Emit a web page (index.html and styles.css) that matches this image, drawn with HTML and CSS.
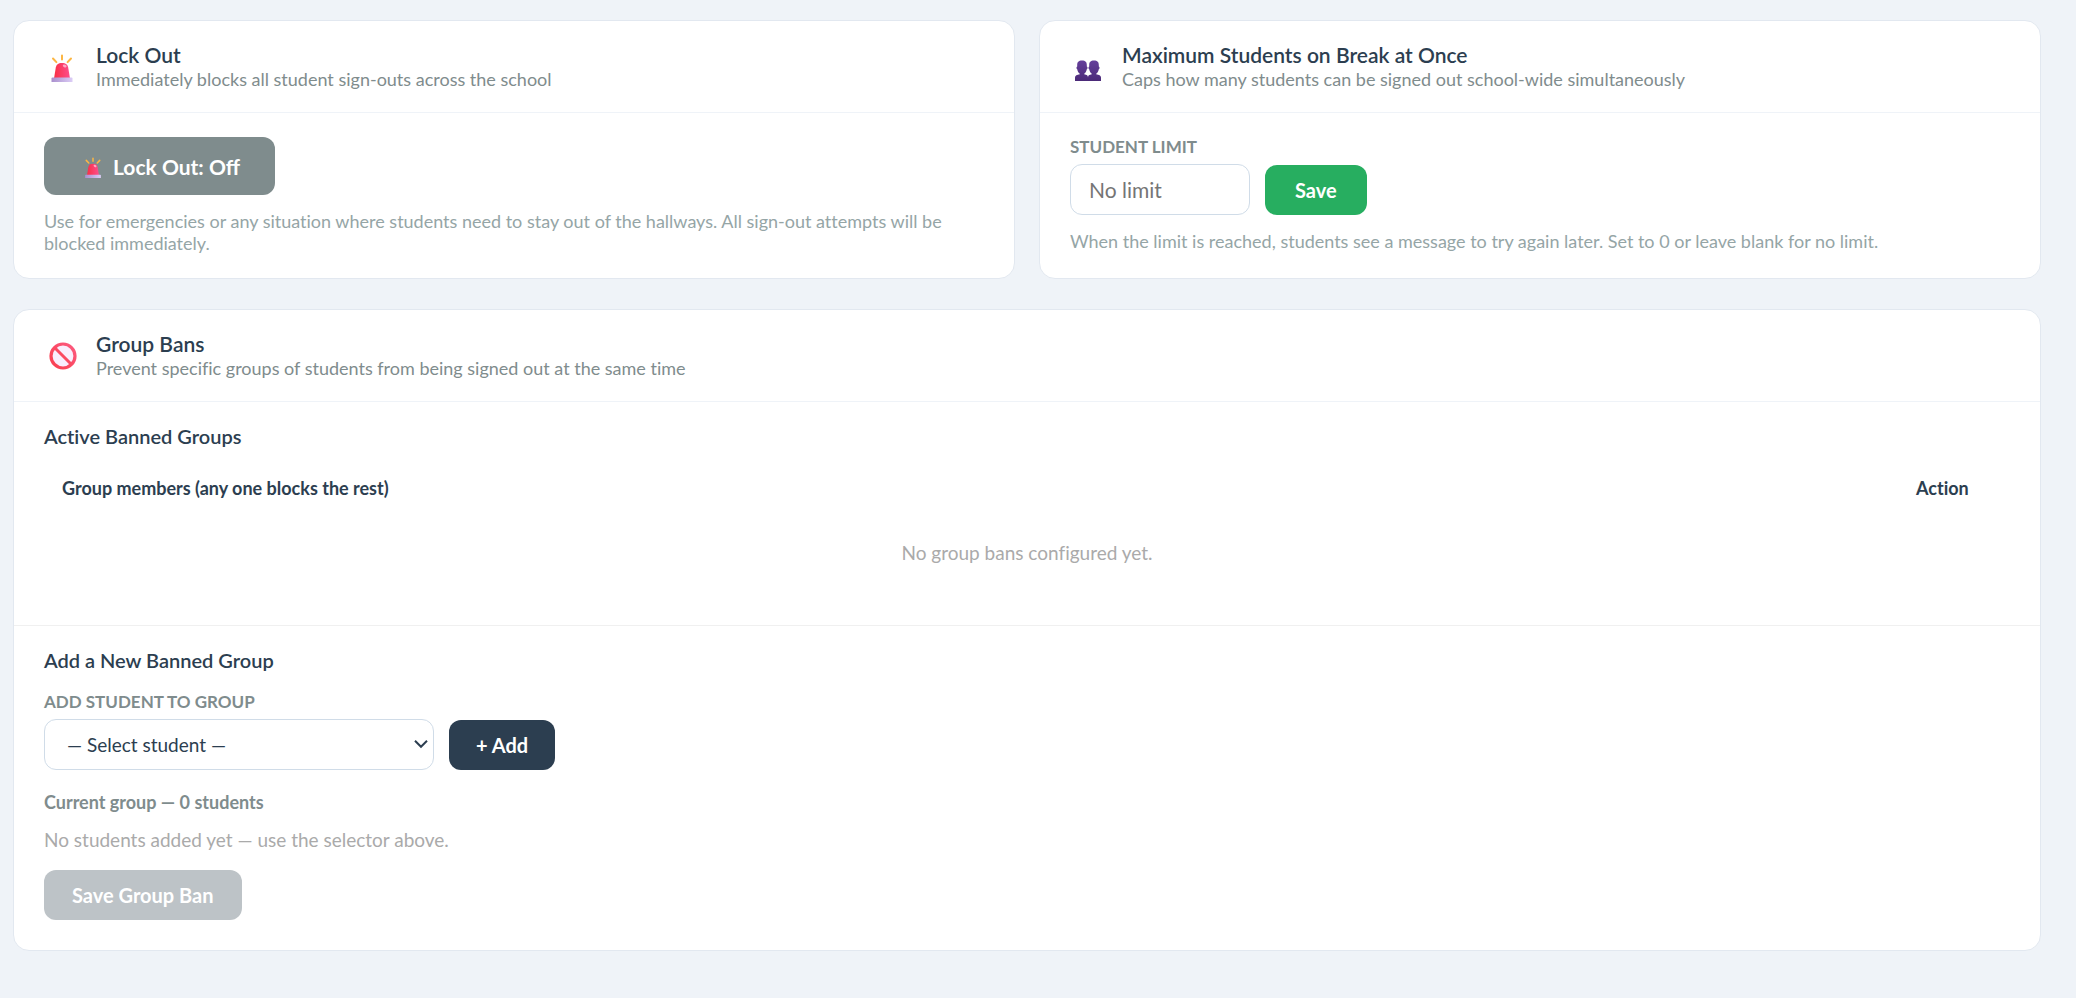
FILE: index.html
```html
<!DOCTYPE html>
<html lang="en">
<head>
<meta charset="utf-8">
<title>Sign-out Controls</title>
<link rel="stylesheet" href="styles.css">
</head>
<body>
<svg class="defs" aria-hidden="true">
  <defs>
    <linearGradient id="dome" x1="0" y1="0" x2="1" y2="0">
      <stop offset="0" stop-color="#f92f45"/><stop offset="1" stop-color="#fd4f8d"/>
    </linearGradient>
    <linearGradient id="base" x1="0" y1="0" x2="1" y2="0">
      <stop offset="0" stop-color="#a98fcd"/><stop offset="1" stop-color="#dccdf6"/>
    </linearGradient>
    <linearGradient id="people" x1="0" y1="0" x2="0" y2="1">
      <stop offset="0" stop-color="#653f9b"/><stop offset="1" stop-color="#4b2a78"/>
    </linearGradient>
    <linearGradient id="ban" x1="0" y1="1" x2="1" y2="0">
      <stop offset="0" stop-color="#f93e4e"/><stop offset="1" stop-color="#fc5a80"/>
    </linearGradient>
    <symbol id="siren" viewBox="0 -2 32 32">
      <g stroke="#fcb643" stroke-width="2" stroke-linecap="round">
        <path d="M16 3.500v4M7 6.500l3.400 3.600M25 6.500l-3.400 3.600"/>
      </g>
      <path d="M16 11c-4 0-5.500 1.500-6.200 4.500L8 26.500h16l-1.800-11c-.7-3-2.200-4.500-6.200-4.500z" fill="url(#dome)"/>
      <ellipse cx="18.700" cy="14" rx="2" ry="1.300" fill="#ffa9c3" transform="rotate(25 18.700 14)"/>
      <path d="M6.500 25.500h19a1 1 0 0 1 1 1v3.500h-21v-3.500a1 1 0 0 1 1-1z" fill="url(#base)"/>
    </symbol>
    <symbol id="busts" viewBox="0 0 32 32">
      <g fill="url(#people)">
        <path d="M10 10.500c-3.500 0-4.800 1.500-4.800 4.500v1.500c-1 .2-1 2.500 0 2.800.4 2.200 1.300 3.700 2.600 4.500v.5C5 24.800 3 25.500 3 27.500V31h13v-3.500c0-2-1-2.700-3.800-3.200v-.5c1.300-.8 2.200-2.300 2.600-4.500 1-.3 1-2.600 0-2.800V15c0-3-1.300-4.500-4.800-4.500z"/>
        <path d="M22 10.500c-3.500 0-4.800 1.500-4.800 4.500v1.500c-1 .2-1 2.500 0 2.800.4 2.200 1.300 3.700 2.600 4.500v.5C17 24.800 16 25.500 16 27.500V31h13v-3.500c0-2-2-2.700-4.800-3.200v-.5c1.300-.8 2.200-2.300 2.600-4.500 1-.3 1-2.600 0-2.800V15c0-3-1.300-4.500-4.800-4.500z"/>
      </g>
    </symbol>
    <symbol id="prohibited" viewBox="-1 -1 32 32">
      <circle cx="16" cy="16" r="12" fill="#f9eefd" stroke="url(#ban)" stroke-width="3.200"/>
      <path d="M7.500 7.500l17 17" stroke="#fb4a62" stroke-width="3"/>
    </symbol>
  </defs>
</svg>
<main class="page">
  <div class="grid">
    <section class="card">
      <header class="card-head">
        <svg class="icon" aria-hidden="true"><use href="#siren"/></svg>
        <div>
          <h2 class="title">Lock Out</h2>
          <p class="subtitle">Immediately blocks all student sign-outs across the school</p>
        </div>
      </header>
      <div class="card-body">
        <button type="button" class="btn btn-lock"><svg class="icon-small" aria-hidden="true"><use href="#siren"/></svg>Lock Out: Off</button>
        <p class="note">Use for emergencies or any situation where students need to stay out of the hallways. All sign-out attempts will be blocked immediately.</p>
      </div>
    </section>
    <section class="card">
      <header class="card-head">
        <svg class="icon" aria-hidden="true"><use href="#busts"/></svg>
        <div>
          <h2 class="title">Maximum Students on Break at Once</h2>
          <p class="subtitle">Caps how many students can be signed out school-wide simultaneously</p>
        </div>
      </header>
      <div class="card-body">
        <div class="row">
          <div class="field">
            <label class="label" for="limit">Student Limit</label>
            <input class="control limit" id="limit" type="number" min="0" placeholder="No limit">
          </div>
          <button type="button" class="btn btn-save">Save</button>
        </div>
        <p class="note">When the limit is reached, students see a message to try again later. Set to 0 or leave blank for no limit.</p>
      </div>
    </section>
  </div>
  <section class="card">
    <header class="card-head">
      <svg class="icon" aria-hidden="true"><use href="#prohibited"/></svg>
      <div>
        <h2 class="title">Group Bans</h2>
        <p class="subtitle">Prevent specific groups of students from being signed out at the same time</p>
      </div>
    </header>
    <div class="card-body">
      <h3 class="section-title">Active Banned Groups</h3>
      <table class="bans">
        <thead><tr><th>Group members (any one blocks the rest)</th><th class="action">Action</th></tr></thead>
        <tbody><tr><td class="empty" colspan="2">No group bans configured yet.</td></tr></tbody>
      </table>
    </div>
    <div class="card-body divided">
      <h3 class="section-title">Add a New Banned Group</h3>
      <div class="row">
        <div class="field">
          <label class="label" for="student">Add Student to Group</label>
          <div class="select">
            <select class="control student" id="student"><option>— Select student —</option></select>
            <svg class="chevron" viewBox="0 0 14 10" aria-hidden="true"><path d="M1 1.800L7 7.800l6-6"/></svg>
          </div>
        </div>
        <button type="button" class="btn btn-add">+ Add</button>
      </div>
      <p class="current">Current group — 0 students</p>
      <p class="none">No students added yet — use the selector above.</p>
      <button type="button" class="btn btn-ban" disabled>Save Group Ban</button>
    </div>
  </section>
</main>
</body>
</html>
```
FILE: styles.css
```css
* { box-sizing: border-box; }
body {
  margin: 0;
  background: #eff3f8;
  color: #2c3e50;
  font-family: Lato, "Liberation Sans", sans-serif;
  font-size: 19px;
  font-variant-ligatures: no-common-ligatures;
}
h2, h3, p { margin: 0; }
button, input, select { font-family: inherit; }
.defs { position: absolute; width: 0; height: 0; }
.page {
  display: flex;
  flex-direction: column;
  gap: 30px;
  padding: 20px 35px 48px 13px;
}
.grid { display: grid; grid-template-columns: 1fr 1fr; gap: 24px; }
.card { background: #fff; border: 1px solid #e2e8f0; border-radius: 16px; }
.card-head {
  display: flex;
  align-items: center;
  gap: 16px;
  padding: 21px 30px 22px;
  border-bottom: 1px solid #eff3f8;
}
.icon { width: 36px; height: 32px; }
.title { font-size: 21px; line-height: 26px; font-weight: 600; }
.section-title { font-size: 20px; line-height: 20px; font-weight: 600; }
.subtitle { color: #7f8c8d; font-size: 18px; line-height: 22px; }
.card-body { padding: 24px 30px; }
.divided { border-top: 1px solid #f0f0f0; padding-bottom: 30px; }
.btn {
  height: 50px;
  border: 0;
  border-radius: 12px;
  color: #fff;
  font-size: 20px;
  font-weight: 700;
}
.btn-lock {
  display: flex;
  align-items: center;
  gap: 6px;
  height: 58px;
  padding: 0 35px;
  background: #7f8c8d;
  font-size: 21px;
}
.icon-small { width: 28px; height: 24px; }
.btn-save { padding: 0 30px; background: #27ae60; }
.btn-add { padding: 0 27px; background: #2c3e50; }
.btn-ban { padding: 0 28px; background: #bdc3c7; }
.note { margin-top: 15px; color: #95a5a6; font-size: 18px; line-height: 22px; }
.row { display: flex; align-items: flex-end; gap: 15px; }
.field { display: flex; flex-direction: column; gap: 7px; }
.label {
  color: #7f8c8d;
  font-size: 17px;
  line-height: 20px;
  font-weight: 700;
  text-transform: uppercase;
}
.control {
  height: 51px;
  border: 1px solid #d0dce8;
  border-radius: 12px;
  background: #fff;
  color: #2c3e50;
}
.limit { width: 180px; padding: 0 18px; font-size: 21px; }
.limit::placeholder { color: #757575; }
.select { position: relative; display: flex; }
.student { appearance: none; width: 390px; padding: 0 22px; font-size: 19px; }
.chevron {
  position: absolute;
  top: 20px;
  right: 6px;
  width: 14px;
  height: 10px;
  fill: none;
  stroke: #2c3e50;
  stroke-width: 2;
  pointer-events: none;
}
.bans { width: 100%; margin-top: 17px; border-collapse: collapse; }
.bans th {
  padding: 14px 18px;
  font-size: 18px;
  line-height: 22px;
  font-weight: 700;
  text-align: left;
}
.bans .action { width: 112px; }
.bans .empty { padding: 28px 18px 36px; color: #aaa; text-align: center; line-height: 24px; }
.divided .row { margin-top: 22px; }
.current { margin-top: 21px; color: #7f8c8d; font-size: 18px; line-height: 22px; font-weight: 700; }
.none { margin: 15px 0 18px; color: #aaa; line-height: 24px; }
```
